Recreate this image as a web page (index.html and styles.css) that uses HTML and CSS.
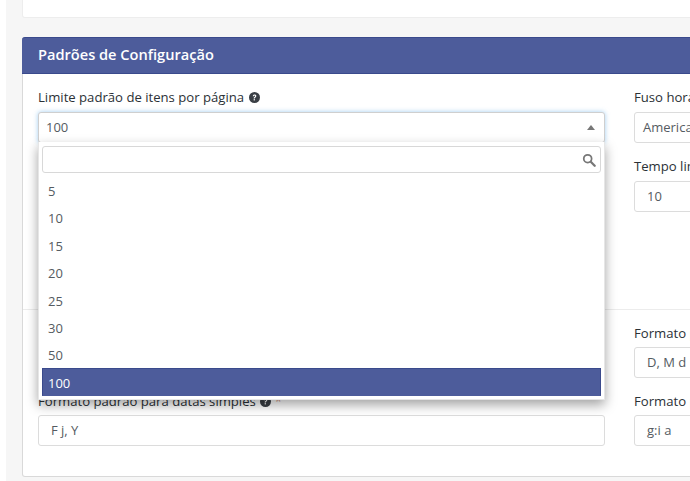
FILE: index.html
```html
<!DOCTYPE html>
<html lang="pt-BR">
<head>
    <meta charset="UTF-8">
    <meta name="viewport" content="width=device-width, initial-scale=1.0">
    <title>Padrões de Configuração</title>
    <link rel="stylesheet" href="styles.css">
</head>
<body>
    <div class="content">
        <div class="top-card"></div>

        <div class="panel">
            <div class="panel-heading">Padrões de Configuração</div>

            <div class="panel-section first">
                <div class="col-left">
                    <div class="field">
                        <label>Limite padrão de itens por página
                            <svg class="help" viewBox="0 0 24 24"><circle cx="12" cy="12" r="12" fill="#3a3f45"/><path d="M8.2 9.4c.2-2.4 1.8-3.7 4-3.7 2.2 0 3.8 1.3 3.8 3.2 0 1.5-.8 2.2-1.9 3-.9.6-1.2 1-1.2 1.9v.4h-2.7v-.6c0-1.5.6-2.2 1.6-2.9.9-.6 1.4-1 1.4-1.7 0-.7-.5-1.1-1.2-1.1-.8 0-1.3.5-1.3 1.5z" fill="#fff"/><rect x="10.2" y="15.6" width="2.7" height="2.7" fill="#fff"/></svg>
                        </label>
                        <div class="select open">
                            <span>100</span>
                            <i class="caret"></i>
                        </div>
                        <div class="dropdown">
                            <div class="search">
                                <svg class="search-icon" viewBox="0 0 16 16"><circle cx="6.5" cy="6.5" r="4.5" fill="none" stroke="#777" stroke-width="2"/><path d="M10 10l4.5 4.5" stroke="#777" stroke-width="2.6" stroke-linecap="round"/></svg>
                            </div>
                            <ul class="options">
                                <li>5</li>
                                <li>10</li>
                                <li>15</li>
                                <li>20</li>
                                <li>25</li>
                                <li>30</li>
                                <li>50</li>
                                <li class="selected">100</li>
                            </ul>
                        </div>
                    </div>
                </div>
                <div class="col-right">
                    <div class="field">
                        <label>Fuso horário</label>
                        <div class="input select-text">America/Sao_Paulo</div>
                    </div>
                    <div class="field">
                        <label>Tempo limite da sessão</label>
                        <div class="input">10</div>
                    </div>
                </div>
            </div>

            <div class="panel-section second">
                <div class="col-left">
                    <div class="field">
                        <label>Formato padrão para datas simples
                            <svg class="help" viewBox="0 0 24 24"><circle cx="12" cy="12" r="12" fill="#3a3f45"/><path d="M8.2 9.4c.2-2.4 1.8-3.7 4-3.7 2.2 0 3.8 1.3 3.8 3.2 0 1.5-.8 2.2-1.9 3-.9.6-1.2 1-1.2 1.9v.4h-2.7v-.6c0-1.5.6-2.2 1.6-2.9.9-.6 1.4-1 1.4-1.7 0-.7-.5-1.1-1.2-1.1-.8 0-1.3.5-1.3 1.5z" fill="#fff"/><rect x="10.2" y="15.6" width="2.7" height="2.7" fill="#fff"/></svg>
                            <span class="required">*</span>
                        </label>
                        <div class="input">F j, Y</div>
                    </div>
                </div>
                <div class="col-right">
                    <div class="field">
                        <label>Formato padrão para dias</label>
                        <div class="input">D, M d</div>
                    </div>
                    <div class="field">
                        <label>Formato padrão para horas</label>
                        <div class="input">g:i a</div>
                    </div>
                </div>
            </div>
        </div>
    </div>
</body>
</html>
```

FILE: styles.css
```css
html, body {
    margin: 0;
    height: 481px;
    overflow: hidden;
}
body {
    font-family: "Open Sans", "Noto Sans", sans-serif;
    font-size: 13px;
    color: #555b61;
    background-color: #fff;
    padding-left: 6px;
}
.content {
    width: 900px;
    height: 481px;
    box-sizing: border-box;
    background-color: #f6f6f6;
    padding-left: 16px;
}
.top-card {
    height: 18px;
    background-color: #fff;
    border: 1px solid #ededed;
    border-top: none;
    border-radius: 0 0 3px 3px;
    box-sizing: border-box;
    margin-bottom: 19px;
}
.panel {
    height: 440px;
    box-sizing: border-box;
    background-color: #fff;
    border: 1px solid #d9d9d9;
    border-top: none;
    border-radius: 3px;
}
.panel-heading {
    height: 37px;
    box-sizing: border-box;
    margin: 0 -1px;
    padding-left: 16px;
    background-color: #4d5c9b;
    border-top: 1px solid #3a4a8c;
    border-bottom: 1px solid #3a4a8c;
    border-radius: 3px 3px 0 0;
    color: #fff;
    font-size: 14.6px;
    font-weight: 600;
    line-height: 33px;
}
.panel-section {
    display: grid;
    grid-template-columns: 567px 1fr;
    column-gap: 29px;
    padding: 0 15px;
    box-sizing: border-box;
}
.panel-section.first {
    height: 236px;
    padding-top: 15px;
    border-bottom: 1px solid #ececec;
}
.panel-section.second {
    padding-top: 14px;
}
.panel-section.second label {
    line-height: 18px;
}
.col-left {
    display: flex;
    flex-direction: column;
    justify-content: flex-end;
}
.first .col-left {
    justify-content: flex-start;
}
.second .col-left {
    height: 122px;
}
.col-right {
    display: flex;
    flex-direction: column;
    gap: 15px;
}
.second .col-right {
    gap: 14px;
}
.field {
    position: relative;
}
label {
    display: block;
    height: 23px;
    line-height: 16px;
    color: #2b3136;
    font-size: 13.13px;
    font-weight: 500;
    white-space: nowrap;
}
.help {
    width: 11px;
    height: 11px;
    margin-left: 1px;
    vertical-align: -1px;
}
.required {
    color: #d9a08f;
}
.input, .select {
    height: 31px;
    box-sizing: border-box;
    padding: 0 12px;
    line-height: 29px;
    background-color: #fff;
    border: 1px solid #dcdcdc;
    border-radius: 3px;
    white-space: nowrap;
    overflow: hidden;
}
.select-text {
    padding-left: 8px;
}
.select.open {
    display: flex;
    align-items: center;
    justify-content: space-between;
    padding: 0 7px;
    border-color: #cfcfcf;
    box-shadow: 0 0 5px rgba(102, 175, 233, 0.6);
}
.caret {
    width: 0;
    height: 0;
    margin-right: 2px;
    border-left: 4px solid transparent;
    border-right: 4px solid transparent;
    border-bottom: 5px solid #777;
}
.dropdown {
    position: absolute;
    top: 53px;
    left: 0;
    right: 0;
    z-index: 10;
    padding: 4px 3px 3px;
    background-color: #fff;
    border: 1px solid #e6e6e6;
    border-top: none;
    box-shadow: 0 5px 11px rgba(0, 0, 0, 0.36);
}
.search {
    display: flex;
    align-items: center;
    justify-content: flex-end;
    height: 27px;
    box-sizing: border-box;
    padding-right: 4px;
    border: 1px solid #d8d8d8;
    border-radius: 3px;
}
.search-icon {
    width: 14px;
    height: 14px;
}
.options {
    list-style: none;
    margin: 3px 0 0;
    padding: 0;
}
.options li {
    height: 27.4px;
    line-height: 31px;
    padding-left: 6px;
}
.options .selected {
    height: 28px;
    line-height: 28px;
    background-color: #4d5c9b;
    border: 1px solid #3a4a8c;
    border-bottom-color: #4d5c9b;
    box-sizing: border-box;
    padding-left: 5px;
    color: #fff;
}
```
